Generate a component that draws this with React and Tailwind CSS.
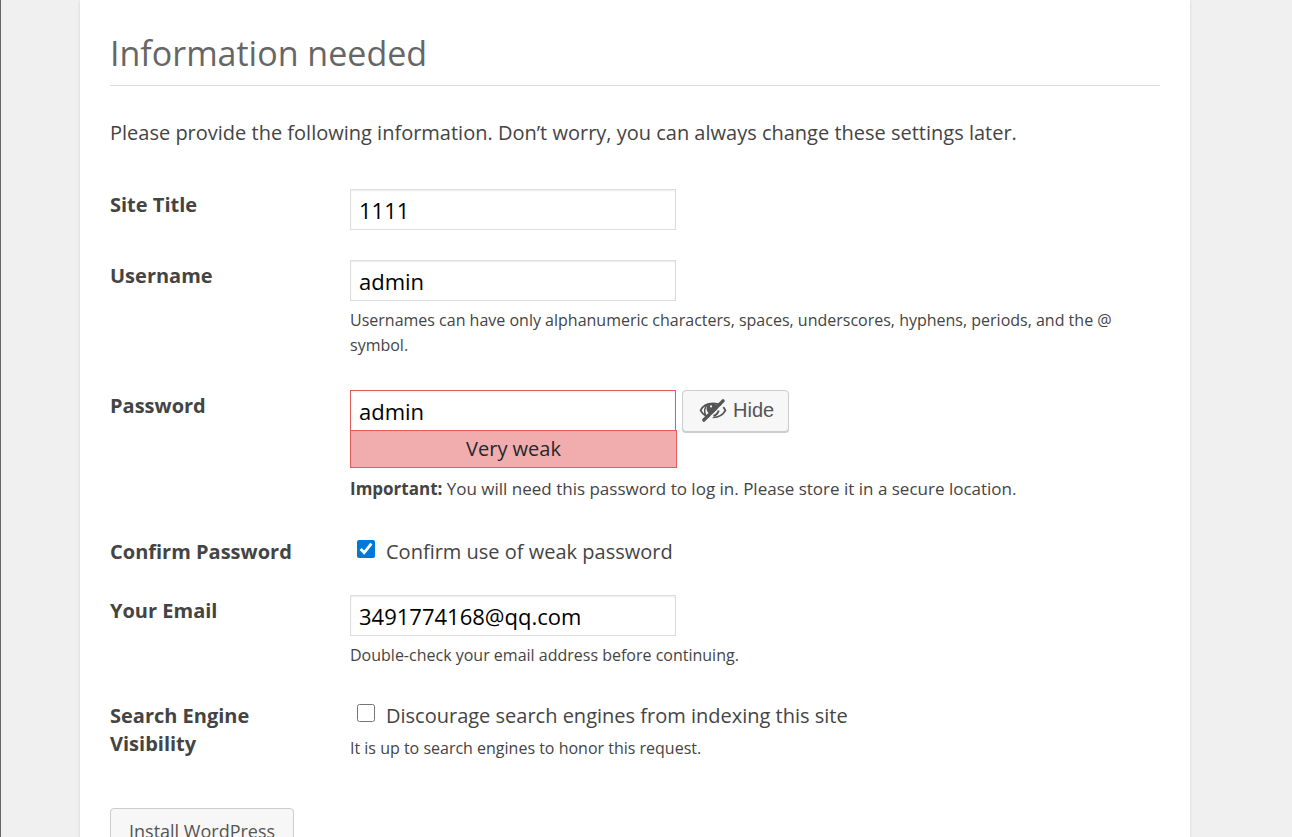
import React from "react";

function HiddenIcon() {
  return (
    <svg viewBox="0 0 20 20" className="size-[30px] shrink-0" fill="none" stroke="#555" aria-hidden="true">
      <path d="M1.7 10.2C3.3 7.2 6.3 5.600 10 5.600s6.700 1.600 8.300 4.600c-1.600 3-4.600 4.700-8.300 4.700s-6.700-1.700-8.300-4.700z" strokeWidth="1.200" />
      <path d="M5.200 13.400C3.800 11.600 4.200 8 6.600 6.100" strokeWidth="1" />
      <circle cx="9.400" cy="9" r="3.700" fill="#555" stroke="none" />
      <path d="M5.400 18.200L17.400 6.200" stroke="#f7f7f7" strokeWidth="1.900" />
      <path d="M13.800 10.300C13.300 12 12 13.400 10.300 13.900" strokeWidth="1.300" />
      <path d="M3.900 16.700L16.700 3.900" strokeWidth="2.300" strokeLinecap="round" />
      <circle cx="8.700" cy="7.600" r="0.700" fill="#f7f7f7" stroke="none" />
    </svg>
  );
}

function Row({ label, htmlFor, children }) {
  return (
    <div className="grid grid-cols-[240px_minmax(0,1fr)] py-[15px]">
      <div className="-mb-px pt-0.5 pr-10 text-[20px] leading-7 font-bold">
        {htmlFor ? <label htmlFor={htmlFor}>{label}</label> : label}
      </div>
      <div>{children}</div>
    </div>
  );
}

const inputClass =
  "block h-[41px] w-[326px] border border-[#ddd] bg-white px-2 text-[22px] text-black outline-none shadow-[inset_0_1px_2px_rgba(0,0,0,0.07)]";

function Hint({ children }) {
  return <p className="pt-[7px] pb-0.5 text-[16px] leading-[25px]">{children}</p>;
}

function Check({ id, checked, children }) {
  return (
    <label htmlFor={id} className="flex h-7 items-center pt-1 pl-[7px] text-[20px] leading-7">
      <input id={id} type="checkbox" defaultChecked={checked} className="mr-[11px] mb-1.5 size-[18px] accent-[#0078d7]" />
      {children}
    </label>
  );
}

export default function App() {
  return (
    <div className="min-h-screen border-l border-[#666] bg-[#f0f0f0] pr-[102px] pl-[79px] font-['Open_Sans',sans-serif] text-[#444]">
      <main className="bg-white px-[30px] pt-[29px] pb-5 shadow-[0_1px_3px_rgba(0,0,0,0.13)]">
        <h1 className="border-b border-[#dadada] pb-2 text-[34px] leading-[48px] font-normal text-[#666]">
          Information needed
        </h1>
        <p className="mt-8 mb-[26px] text-[20px] leading-[30px]">
          Please provide the following information. Don’t worry, you can always change these settings later.
        </p>
        <form onSubmit={(e) => e.preventDefault()}>
          <Row label="Site Title" htmlFor="title">
            <input id="title" type="text" defaultValue="1111" className={inputClass} />
          </Row>
          <Row label="Username" htmlFor="user">
            <input id="user" type="text" defaultValue="admin" className={inputClass} />
            <Hint>
              Usernames can have only alphanumeric characters, spaces, underscores, hyphens, periods, and the @ symbol.
            </Hint>
          </Row>
          <Row label="Password" htmlFor="password">
            <div className="flex items-start gap-[5px]">
              <div className="w-[327px]">
                <input
                  id="password"
                  type="text"
                  defaultValue="admin"
                  className="block h-10 w-[326px] border border-b-0 border-[#e35b5b] bg-white px-2 text-[22px] text-black shadow-[inset_0_1px_2px_rgba(0,0,0,0.07)] outline-none"
                />
                <div className="h-[38px] border border-[#e35b5b] bg-[#f1adad] text-center text-[20px] leading-9 text-[#23282d]">
                  Very weak
                </div>
              </div>
              <button
                type="button"
                className="flex h-[42px] w-[107px] items-center gap-[5px] rounded border border-[#ccc] bg-[#f7f7f7] pb-0.5 pl-[15px] font-['Liberation_Sans',sans-serif] text-[20px] text-[#555] shadow-[0_1px_0_#ccc]"
              >
                <HiddenIcon />
                Hide
              </button>
            </div>
            <p className="pt-2 pb-1 text-[17px] leading-[26px]">
              <strong>Important:</strong> You will need this password to log in. Please store it in a secure location.
            </p>
          </Row>
          <Row label="Confirm Password">
            <Check id="weak" checked>Confirm use of weak password</Check>
          </Row>
          <Row label="Your Email" htmlFor="email">
            <input id="email" type="email" defaultValue="3491774168@qq.com" className={inputClass} />
            <Hint>Double-check your email address before continuing.</Hint>
          </Row>
          <Row label="Search Engine Visibility">
            <Check id="visibility">Discourage search engines from indexing this site</Check>
            <p className="pt-2 text-[16px] leading-[25px]">It is up to search engines to honor this request.</p>
          </Row>
          <button
            type="submit"
            className="mt-8 h-[46px] rounded border border-[#ccc] bg-[#f7f7f7] px-[18px] text-[18px] text-[#555] shadow-[0_1px_0_#ccc]"
          >
            Install WordPress
          </button>
        </form>
      </main>
    </div>
  );
}
